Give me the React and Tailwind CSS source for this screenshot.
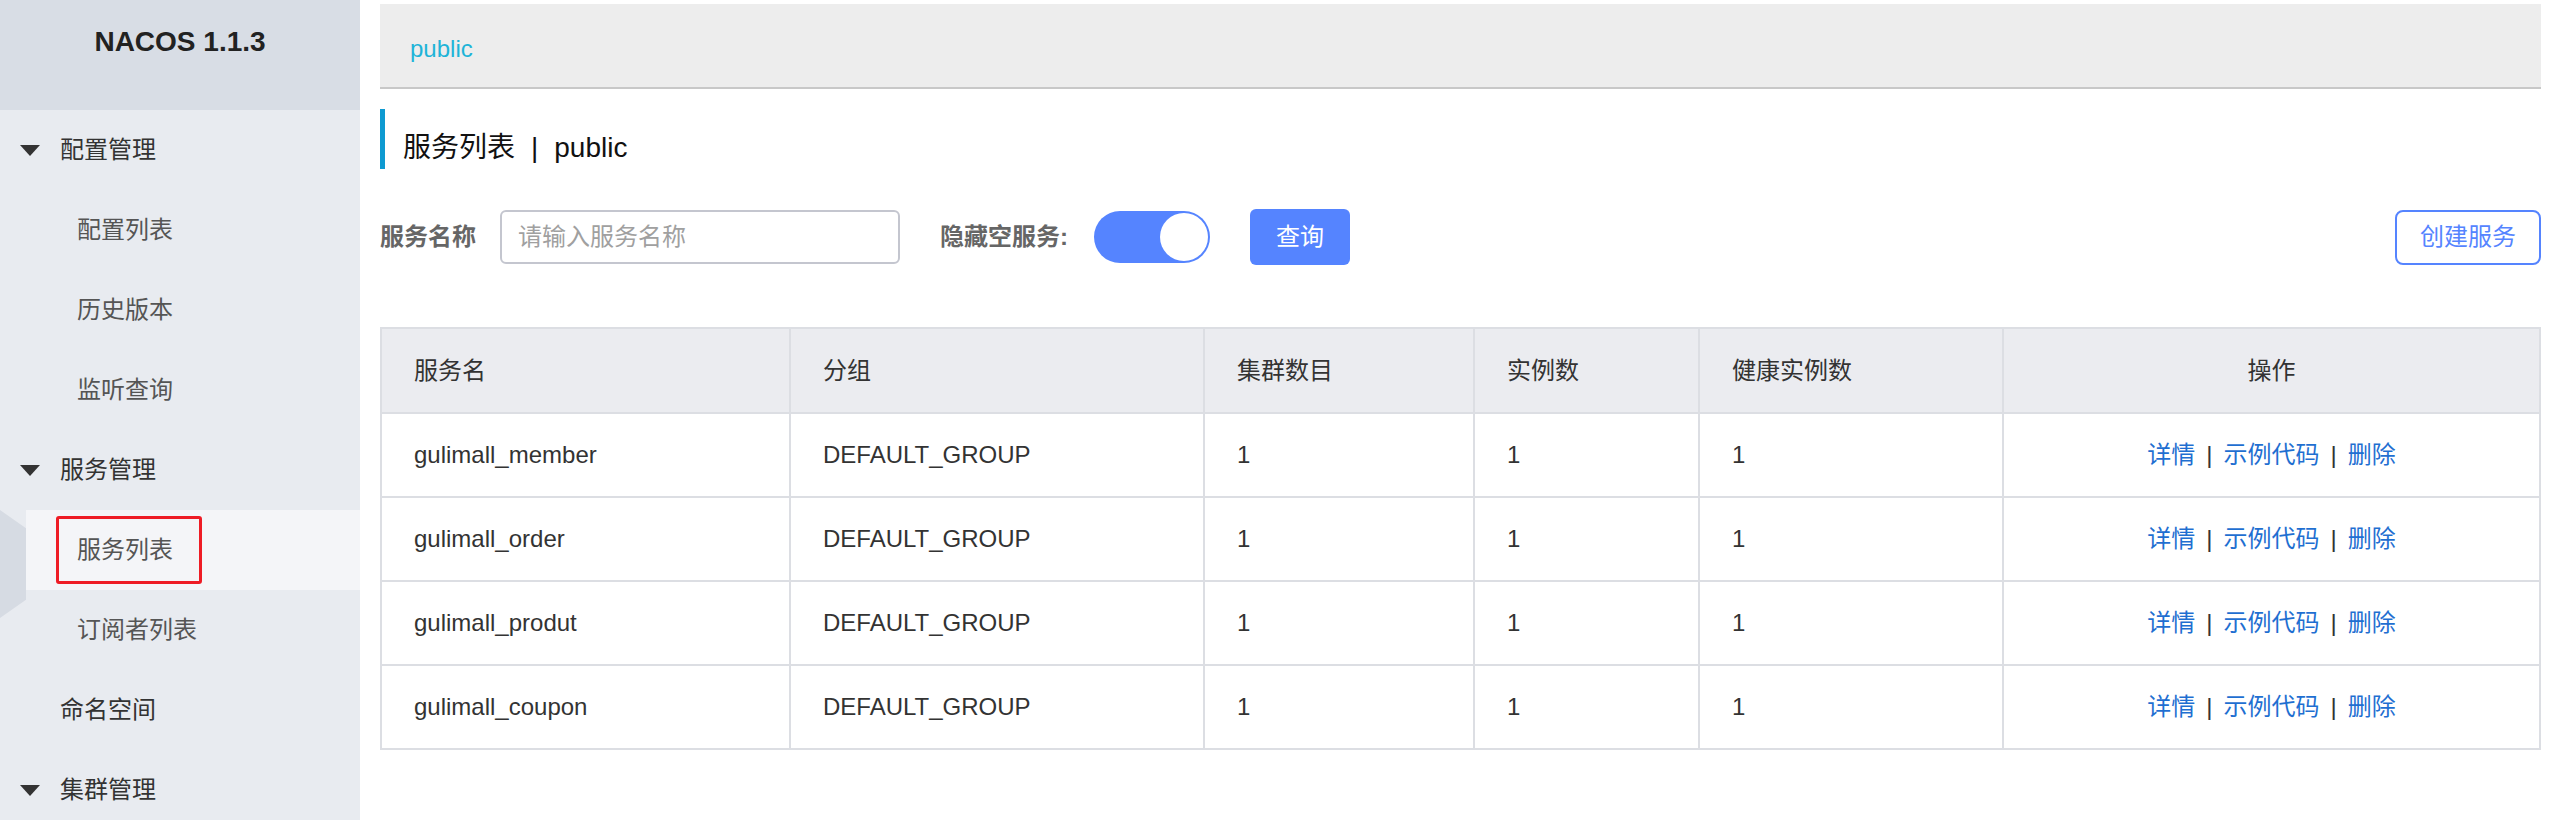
import React from 'react'

const font = { fontFamily: '"Liberation Sans", "Noto Sans CJK SC", sans-serif' }

const menu = [
  { label: '配置管理', type: 'group' },
  { label: '配置列表', type: 'sub' },
  { label: '历史版本', type: 'sub' },
  { label: '监听查询', type: 'sub' },
  { label: '服务管理', type: 'group' },
  { label: '服务列表', type: 'sub', active: true },
  { label: '订阅者列表', type: 'sub' },
  { label: '命名空间', type: 'plain' },
  { label: '集群管理', type: 'group' },
]

const services = ['gulimall_member', 'gulimall_order', 'gulimall_produt', 'gulimall_coupon']

const cols = [
  { title: '服务名', w: 'w-[409px]' },
  { title: '分组', w: 'w-[414px]' },
  { title: '集群数目', w: 'w-[270px]' },
  { title: '实例数', w: 'w-[225px]' },
  { title: '健康实例数', w: 'w-[304px]' },
  { title: '操作', w: 'w-[537px]', center: true },
]

function Caret() {
  return (
    <svg width="20" height="11" viewBox="0 0 20 11" className="absolute left-[20px]">
      <path d="M0 0 L20 0 L10 11 Z" fill="#333" />
    </svg>
  )
}

function MenuItem({ item }) {
  if (item.type === 'group') {
    return (
      <div className="relative h-[80px] flex items-center">
        <Caret />
        <span className="ml-[60px] text-[24px] text-[#333]">{item.label}</span>
      </div>
    )
  }
  if (item.type === 'plain') {
    return (
      <div className="h-[80px] flex items-center">
        <span className="ml-[60px] text-[24px] text-[#333]">{item.label}</span>
      </div>
    )
  }
  return (
    <div className={`h-[80px] flex items-center ${item.active ? 'bg-[#f4f5f8] ml-[26px]' : ''}`}>
      {item.active ? (
        <span className="ml-[30px] h-[68px] w-[146px] border-[3px] border-[#ee1c25] rounded-[3px] flex items-center pl-[18px] text-[24px] text-[#555]">
          {item.label}
        </span>
      ) : (
        <span className="ml-[77px] text-[24px] text-[#555]">{item.label}</span>
      )}
    </div>
  )
}

function Sidebar() {
  return (
    <div className="relative w-[360px] shrink-0 h-full bg-[#e8ebf0]">
      <div className="h-[110px] bg-[#d8dde5] flex justify-center pt-[28px]">
        <span className="text-[28px] leading-[28px] font-bold text-[#222]">NACOS 1.1.3</span>
      </div>
      {menu.map((m) => (
        <MenuItem key={m.label} item={m} />
      ))}
      <div className="absolute left-0 top-[510px] w-[26px] h-[108px] bg-[#d6dbe3] [clip-path:polygon(0_0,100%_17%,100%_83%,0_100%)]" />
    </div>
  )
}

function Actions() {
  return (
    <span className="text-[#1f6fd1]">
      详情<span className="mx-[11px] text-[#333]">|</span>示例代码<span className="mx-[11px] text-[#333]">|</span>删除
    </span>
  )
}

export default function App() {
  return (
    <div className="flex w-[2560px] h-[820px] overflow-hidden bg-white" style={font}>
      <Sidebar />
      <div className="flex-1 pl-[20px] pr-[21px] pt-[4px]">
        <div className="h-[85px] bg-[#ededed] border-b-[2px] border-[#c8c8c8] flex items-center pl-[30px] pt-[6px]">
          <span className="text-[24px] text-[#1eb4d8]">public</span>
        </div>

        <div className="mt-[20px] h-[60px] border-l-[5px] border-[#0e9ad1] pl-[18px] flex items-center pt-[18px] text-[28px] text-[#111]">
          服务列表<span className="mx-[16px]">|</span>public
        </div>

        <div className="mt-[40px] h-[56px] flex items-center">
          <span className="text-[24px] font-bold text-[#666]">服务名称</span>
          <div className="ml-[24px] w-[400px] h-[54px] border-[2px] border-[#c4c6cf] rounded-[6px] flex items-center pl-[16px] text-[24px] text-[#a0a0a0]">
            请输入服务名称
          </div>
          <span className="ml-[40px] text-[24px] font-bold text-[#666]">隐藏空服务:</span>
          <div className="ml-[26px] w-[116px] h-[52px] rounded-full bg-[#5584ff] flex items-center justify-end pr-[2px]">
            <div className="w-[48px] h-[48px] rounded-full bg-white" />
          </div>
          <div className="ml-[40px] w-[100px] h-[56px] rounded-[6px] bg-[#5584ff] flex items-center justify-center text-[24px] text-white">
            查询
          </div>
          <div className="ml-auto w-[146px] h-[55px] rounded-[8px] border-[2px] border-[#5584ff] flex items-center justify-center text-[24px] text-[#5584ff]">
            创建服务
          </div>
        </div>

        <table className="mt-[62px] border-collapse border-[2px] border-[#dcdee3] table-fixed w-[2159px] text-[24px] text-[#333]">
          <thead>
            <tr className="h-[85px] bg-[#ebecf0]">
              {cols.map((c) => (
                <th
                  key={c.title}
                  className={`${c.w} border-[2px] border-[#dcdee3] font-normal px-[32px] ${c.center ? 'text-center' : 'text-left'}`}
                >
                  {c.title}
                </th>
              ))}
            </tr>
          </thead>
          <tbody>
            {services.map((s) => (
              <tr key={s} className="h-[84px]">
                <td className="border-[2px] border-[#dcdee3] px-[32px]">{s}</td>
                <td className="border-[2px] border-[#dcdee3] px-[32px]">DEFAULT_GROUP</td>
                <td className="border-[2px] border-[#dcdee3] px-[32px]">1</td>
                <td className="border-[2px] border-[#dcdee3] px-[32px]">1</td>
                <td className="border-[2px] border-[#dcdee3] px-[32px]">1</td>
                <td className="border-[2px] border-[#dcdee3] px-[32px] text-center">
                  <Actions />
                </td>
              </tr>
            ))}
          </tbody>
        </table>
      </div>
    </div>
  )
}
